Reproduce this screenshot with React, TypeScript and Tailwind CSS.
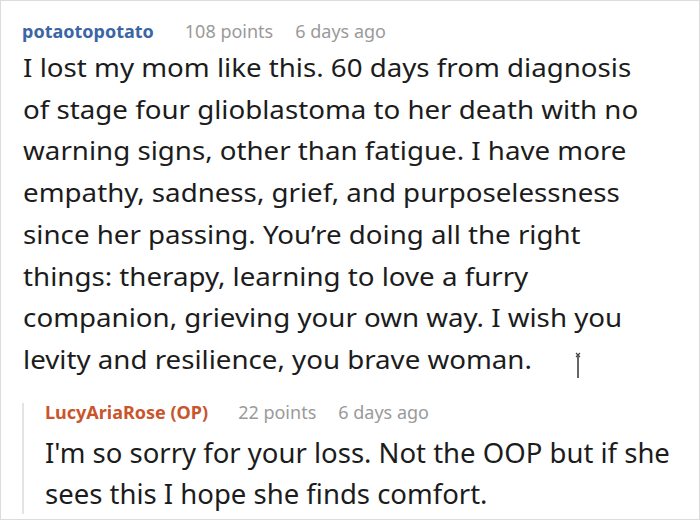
export default function App() {
  return (
    <div className="relative h-[520px] w-[700px] overflow-hidden border border-[#dcdcdc] bg-white font-['Noto_Sans',sans-serif]">
      <div className="px-[21px] pt-[18px]">
        <div className="flex items-baseline whitespace-nowrap text-[18px] leading-[24px]">
          <span className="font-bold text-[#3b66a6]">potaotopotato</span>
          <span className="ml-[31px] text-[#9a9a9a]">108 points</span>
          <span className="ml-[22px] text-[#9a9a9a]">6 days ago</span>
        </div>
        <p className="mt-[4px] w-[590px] origin-left scale-x-[1.107] whitespace-nowrap pl-px text-[25px] leading-[41.7px] text-[#1c1c1c]">
          I lost my mom like this. 60 days from diagnosis
          <br />
          of stage four glioblastoma to her death with no
          <br />
          warning signs, other than fatigue. I have more
          <br />
          empathy, sadness, grief, and purposelessness
          <br />
          since her passing. You’re doing all the right
          <br />
          things: therapy, learning to love a furry
          <br />
          companion, grieving your own way. I wish you
          <br />
          levity and resilience, you brave woman.
        </p>
      </div>
      <div className="ml-[21px] mt-[30px] border-l-2 border-[#e4e4e4] pl-[21px]">
        <div className="-mt-[8px] flex items-baseline whitespace-nowrap text-[18px] leading-[18px]">
          <span className="font-bold text-[#c9552c]">LucyAriaRose (OP)</span>
          <span className="ml-[30px] text-[#9a9a9a]">22 points</span>
          <span className="ml-[22px] text-[#9a9a9a]">6 days ago</span>
        </div>
        <p className="-mb-[10px] mt-[11px] whitespace-nowrap text-[27.5px] leading-[41px] text-[#1c1c1c]">
          I'm so sorry for your loss. Not the OOP but if she
          <br />
          sees this I hope she finds comfort.
        </p>
      </div>
      <svg className="absolute left-[572px] top-[350px]" width="10" height="28" viewBox="0 0 10 28">
        <path d="M3 2 L7 6 M7 2 L3 6" stroke="#444" strokeWidth="1.2" fill="none" />
        <path d="M5 5 V27" stroke="#666" strokeWidth="2" fill="none" />
      </svg>
    </div>
  );
}
